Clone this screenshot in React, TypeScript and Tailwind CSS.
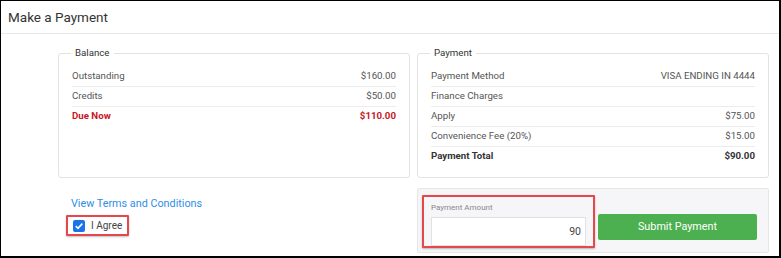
import React from "react";

function Row({ label, value, cls = "", last = false }: { label: string; value?: string; cls?: string; last?: boolean }) {
  return (
    <div className={`flex h-[20px] items-center justify-between ${last ? "" : "border-b border-[#ececec]"} ${cls}`}>
      <span>{label}</span>
      <span>{value}</span>
    </div>
  );
}

export default function App() {
  return (
    <div
      className="relative h-[258px] w-[781px] overflow-hidden border-t border-l border-r-2 border-b-2 border-black bg-white text-[9.7px] text-[#555]"
      style={{ fontFamily: "Roboto, 'Noto Sans', sans-serif" }}
    >
      <div className="flex h-[33px] items-center border-b border-[#e8e8e8] pl-[7px] text-[13.5px] text-[#333]">
        Make a Payment
      </div>
      <div className="grid grid-cols-[352px_352px] gap-x-[7px] pl-[57px] pt-[12px]">
        <fieldset className="h-[132px] rounded-[3px] border border-[#e3e3e3] px-[13px] pt-[6px]">
          <legend className="ml-[-1px] px-[4px] text-[9.7px] text-[#333]">Balance</legend>
          <Row label="Outstanding" value="$160.00" />
          <Row label="Credits" value="$50.00" />
          <Row label="Due Now" value="$110.00" cls="font-bold text-[#c8161d]" last />
        </fieldset>
        <fieldset className="h-[132px] rounded-[3px] border border-[#e3e3e3] px-[13px] pt-[6px]">
          <legend className="ml-[-1px] px-[4px] text-[9.7px] text-[#333]">Payment</legend>
          <Row label="Payment Method" value="VISA ENDING IN 4444" />
          <Row label="Finance Charges" />
          <Row label="Apply" value="$75.00" />
          <Row label="Convenience Fee (20%)" value="$15.00" />
          <Row label="Payment Total" value="$90.00" cls="font-bold text-[#333]" last />
        </fieldset>
        <div className="flex flex-col items-start pl-[13px] pt-[18px]">
          <a className="block text-[10.8px] text-[#2f8ee5]">View Terms and Conditions</a>
          <div className="mt-[3px] ml-[-5px] flex h-[21px] items-center gap-[6px] rounded-[1px] border-2 border-[#e5474b] px-[5px] shadow-[0_1px_2px_rgba(0,0,0,0.25)]">
            <span className="flex h-[12px] w-[12px] items-center justify-center rounded-[2px] bg-[#1a73e8]">
              <svg width="10" height="10" viewBox="0 0 10 10">
                <path d="M1.8 5.2 L4 7.3 L8.3 2.6" fill="none" stroke="white" strokeWidth="1.6" />
              </svg>
            </span>
            <span className="text-[10px] text-[#444]">I Agree</span>
          </div>
        </div>
        <div className="mt-[10px] flex h-[65px] items-start gap-[3px] rounded-[2px] border border-[#e6e6e6] bg-[#f6f6f8] pl-[4px] pt-[6px]">
          <div className="h-[53px] w-[173px] rounded-[1px] border-2 border-[#e5474b] bg-[#f6f6f8] px-[7px] pt-[5px] shadow-[0_1px_2px_rgba(0,0,0,0.25)]">
            <div className="text-[8px] text-[#888]">Payment Amount</div>
            <div className="mt-[3px] flex h-[29px] items-center justify-end border border-[#e2e2e2] bg-white pr-[4px] text-[10.5px] text-[#444]">
              90
            </div>
          </div>
          <button className="mt-[19px] h-[26px] w-[159px] rounded-[2px] bg-[#4caf50] text-[10.8px] text-white">
            Submit Payment
          </button>
        </div>
      </div>
    </div>
  );
}
